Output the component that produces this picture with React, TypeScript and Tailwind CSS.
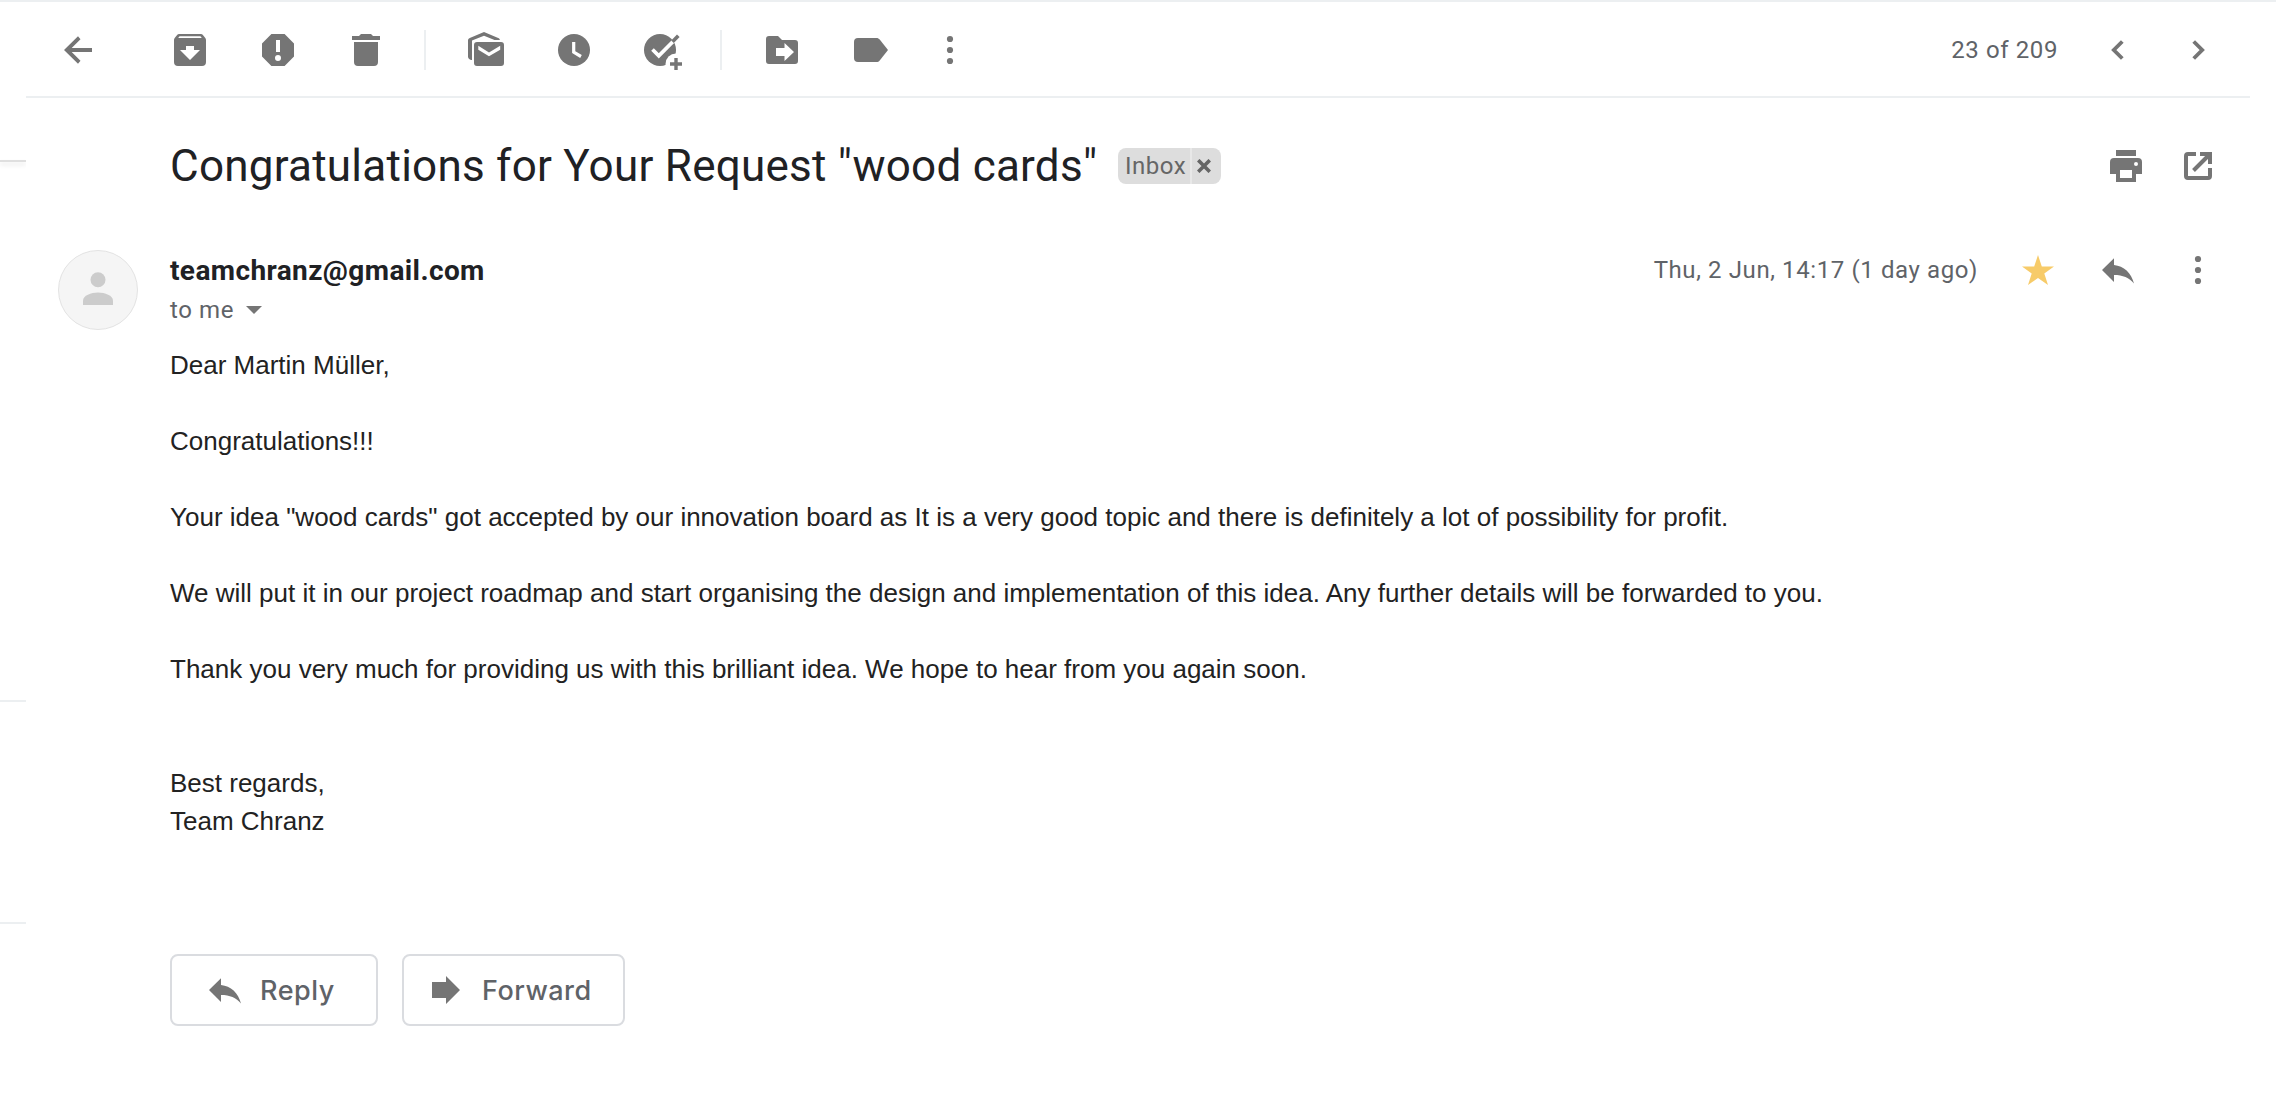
import type { ReactNode } from "react";

function Icon({ children, className = "" }: { children: ReactNode; className?: string }) {
  return (
    <svg viewBox="0 0 40 40" fill="currentColor" className={`h-10 w-10 shrink-0 text-[#757575] ${className}`}>
      {children}
    </svg>
  );
}

const BackIcon = () => (
  <Icon>
    <path d="M34 18H13.7l8.8-8.8L20 6.3 6 20l14 13.7 2.5-2.9-8.8-8.8H34z" />
  </Icon>
);

const ArchiveIcon = () => (
  <Icon>
    <path
      fillRule="evenodd"
      d="M9 4h22c.7 0 1.300.3 1.700.8l2.600 3.200c.45.5.7 1.200.7 2V32a4 4 0 0 1-4 4H8a4 4 0 0 1-4-4V10c0-.8.25-1.500.7-2l2.600-3.200C7.700 4.300 8.300 4 9 4zM9.600 6.200 8.200 8h23.600l-1.400-1.800zM16 16v4h-6l10 10 10-10h-6v-4z"
    />
  </Icon>
);

const SpamIcon = () => (
  <Icon>
    <path
      fillRule="evenodd"
      d="M13.400 4h13.200L36 13.400v13.200L26.600 36H13.400L4 26.600V13.400zM18 10v12h4V10zM20 25a3 3 0 1 0 0 6 3 3 0 0 0 0-6z"
    />
  </Icon>
);

const TrashIcon = () => (
  <Icon>
    <path d="M8 12h24v20a4 4 0 0 1-4 4H12a4 4 0 0 1-4-4zM6 6h7l2-2h10l2 2h7v4H6z" />
  </Icon>
);

const UnreadIcon = () => (
  <Icon>
    <path d="M34 10h-5.500L18 5.800 6 10.600V30a3.600 3.600 0 0 1-4-3.600V10.500c0-1.300.6-2.100 1.800-2.600L18 2l14.200 5.900c.9.4 1.600 1.100 1.800 2.100z" />
    <path
      fillRule="evenodd"
      d="M11 12h24a3 3 0 0 1 3 3v18a3 3 0 0 1-3 3H11a3 3 0 0 1-3-3V15a3 3 0 0 1 3-3zm1.300 3.800v4L23 26.300l11.200-6.500v-4L23 22.500z"
    />
  </Icon>
);

const SnoozeIcon = () => (
  <Icon>
    <circle cx="20" cy="20" r="16" />
    <path d="M19.700 12v10.200l7.300 4.300" fill="none" stroke="#fff" strokeWidth="3.200" />
  </Icon>
);

const AddTaskIcon = () => (
  <Icon>
    <circle cx="18" cy="20" r="16" />
    <circle cx="34" cy="34" r="10.500" fill="#fff" />
    <path d="M10.500 19.500l6.300 6.300L36 6.500" fill="none" stroke="#fff" strokeWidth="3.700" />
    <path d="M30.500 11.800l5.800-6" fill="none" stroke="currentColor" strokeWidth="3.600" />
    <path d="M28 34h12M34 28v12" fill="none" stroke="currentColor" strokeWidth="3.400" />
  </Icon>
);

const MoveIcon = () => (
  <Icon>
    <path
      fillRule="evenodd"
      d="M8 6h8l4 4h13a3 3 0 0 1 3 3v18a3 3 0 0 1-3 3H7a3 3 0 0 1-3-3V9a3 3 0 0 1 3-3zM22.500 13v5H14v8h8.500v5l9.500-9z"
    />
  </Icon>
);

const LabelIcon = () => (
  <Icon>
    <path d="M8 8h18.500c1.300 0 2.400.6 3.200 1.600L38 20l-8.300 10.400c-.8 1-1.900 1.600-3.200 1.600H8a4 4 0 0 1-4-4V12a4 4 0 0 1 4-4z" />
  </Icon>
);

const MoreIcon = () => (
  <Icon>
    <circle cx="20" cy="9" r="3.100" />
    <circle cx="20" cy="20" r="3.100" />
    <circle cx="20" cy="31" r="3.100" />
  </Icon>
);

const PrevIcon = () => (
  <Icon>
    <path d="M24.300 11.500L15.800 20l8.500 8.500" fill="none" stroke="currentColor" strokeWidth="3.800" />
  </Icon>
);

const NextIcon = () => (
  <Icon>
    <path d="M15.700 11.500l8.500 8.500-8.500 8.500" fill="none" stroke="currentColor" strokeWidth="3.800" />
  </Icon>
);

const PrintIcon = () => (
  <Icon>
    <path
      fillRule="evenodd"
      d="M10 4h20v6H10zM8 12h24a4 4 0 0 1 4 4v12h-6v8H10v-8H4V16a4 4 0 0 1 4-4zm6 12v8h12v-8zM30 16a2 2 0 1 0 0 4 2 2 0 0 0 0-4z"
    />
  </Icon>
);

const OpenIcon = () => (
  <Icon>
    <path d="M18 8H10a2 2 0 0 0-2 2v20a2 2 0 0 0 2 2h20a2 2 0 0 0 2-2v-8M22 8h10v10M32 8L15.500 24.500" fill="none" stroke="currentColor" strokeWidth="4" />
  </Icon>
);

const StarIcon = () => (
  <Icon className="text-[#f7cb69]">
    <path d="M20 5l3.800 11.400H36l-9.700 7.100L30 35l-10-7-10 7 3.700-11.500L4 16.400h12.200z" />
  </Icon>
);

const ReplyIcon = () => (
  <Icon>
    <path d="M16 8.200V15c9.800 1.200 17.300 7.500 20 18.600-4.800-6-11.200-8.600-20-8.600v7L4 20z" />
  </Icon>
);

const ForwardIcon = () => (
  <Icon>
    <path d="M6 12h14V6l14 14-14 14v-6H6z" />
  </Icon>
);

const Divider = () => <div className="mr-10 ml-[38px] h-10 w-[2px] bg-[#eceff1]" />;

function Toolbar() {
  return (
    <header className="flex h-24 items-center border-b-2 border-[#eceff1] px-8 pt-[2px]">
      <BackIcon />
      <div className="ml-[72px] flex gap-12">
        <ArchiveIcon />
        <SpamIcon />
        <TrashIcon />
      </div>
      <Divider />
      <div className="flex gap-12">
        <UnreadIcon />
        <SnoozeIcon />
        <AddTaskIcon />
      </div>
      <Divider />
      <div className="flex gap-12">
        <MoveIcon />
        <LabelIcon />
      </div>
      <div className="ml-10">
        <MoreIcon />
      </div>
      <div className="ml-auto flex items-center gap-10">
        <span className="text-2xl tracking-[0.6px] text-[#5f6368]">23 of 209</span>
        <PrevIcon />
        <NextIcon />
      </div>
    </header>
  );
}

function Subject() {
  return (
    <div className="flex h-[136px] items-center pr-8 pl-36">
      <h1 className="w-[948px] text-[44px] leading-[56px] font-normal tracking-[0.25px] whitespace-nowrap text-[#202124]">
        Congratulations for Your Request "wood cards"
      </h1>
      <div className="flex h-9 w-[103px] overflow-hidden rounded-lg bg-[#ddd] text-[#666]">
        <span className="flex w-[74px] items-center border-r-2 border-[#e8e8e8] pl-[7px] text-2xl tracking-[0.5px]">Inbox</span>
        <span className="flex flex-1 items-center pl-[5px]">
          <svg viewBox="0 0 14 14" className="h-[14px] w-[14px]" fill="none" stroke="currentColor" strokeWidth="3.6">
            <path d="M1.200 1.200l11.600 11.600M12.800 1.200L1.200 12.800" />
          </svg>
        </span>
      </div>
      <div className="ml-auto flex gap-8">
        <PrintIcon />
        <OpenIcon />
      </div>
    </div>
  );
}

function Avatar() {
  return (
    <div className="flex h-20 w-20 shrink-0 items-center justify-center rounded-full border border-[#e3e3e3] bg-[#f5f5f5]">
      <svg viewBox="0 0 40 40" className="h-10 w-10" fill="#ccc">
        <circle cx="20" cy="9.700" r="7.500" />
        <path d="M5 35v-4.500C5 25.500 13 22.500 20 22.500s15 3 15 8V35z" />
      </svg>
    </div>
  );
}

const paragraphs = [
  "Dear Martin Müller,",
  "Congratulations!!!",
  'Your idea "wood cards" got accepted by our innovation board as It is a very good topic and there is definitely a lot of possibility for profit.',
  "We will put it in our project roadmap and start organising the design and implementation of this idea. Any further details will be forwarded to you.",
  "Thank you very much for providing us with this brilliant idea. We hope to hear from you again soon.",
];

function Message() {
  return (
    <article className="flex pt-4 pr-8 pl-8">
      <Avatar />
      <div className="ml-8 flex-1">
        <div className="flex h-10 items-center justify-between">
          <span className="pt-[2px] text-[28px] font-bold tracking-[0.4px] text-[#202124]">teamchranz@gmail.com</span>
          <div className="flex items-center gap-10">
            <span className="text-2xl tracking-[0.6px] text-[#5f6368]">Thu, 2 Jun, 14:17 (1 day ago)</span>
            <StarIcon />
            <ReplyIcon />
            <MoreIcon />
          </div>
        </div>
        <div className="flex h-[39px] items-center text-2xl tracking-[0.6px] text-[#5f6368]">
          to me
          <svg viewBox="0 0 16 8" className="ml-3 h-2 w-4" fill="#757575">
            <path d="M0 0h16L8 8z" />
          </svg>
        </div>
        <div className="mt-[17px] flex flex-col gap-[38px] font-['Liberation_Sans',Arial,sans-serif] text-[26px] leading-[38px] text-[#222]">
          {paragraphs.map((text) => (
            <p key={text}>{text}</p>
          ))}
          <p className="pt-[38px]">
            Best regards,
            <br />
            Team Chranz
          </p>
        </div>
        <div className="mt-[114px] flex gap-6 font-['Inter',sans-serif] text-[27px] font-medium tracking-[0.5px] text-[#5f6368]">
          <button className="flex h-[72px] w-[208px] items-center rounded-lg border-2 border-[#dadce0] pl-[33px]">
            <ReplyIcon />
            <span className="ml-[15px] pt-[2px]">Reply</span>
          </button>
          <button className="flex h-[72px] w-[223px] items-center rounded-lg border-2 border-[#dadce0] pl-[22px]">
            <ForwardIcon />
            <span className="ml-[16px] pt-[2px]">Forward</span>
          </button>
        </div>
      </div>
    </article>
  );
}

export default function App() {
  return (
    <div className="flex h-[1100px] w-[2276px] overflow-hidden border-t-2 border-[#eceff1] bg-white font-['Roboto',sans-serif]">
      <aside className="flex w-[26px] shrink-0 flex-col">
        <div className="mt-[158px] h-[2px] bg-[#dfdfdf] shadow-[0_3px_4px_rgba(0,0,0,0.10)]" />
        <div className="mt-[538px] h-[2px] bg-[#eceff1]" />
        <div className="mt-[220px] h-[2px] bg-[#eceff1]" />
      </aside>
      <main className="mr-[26px] flex-1 bg-white">
        <Toolbar />
        <Subject />
        <Message />
      </main>
    </div>
  );
}
